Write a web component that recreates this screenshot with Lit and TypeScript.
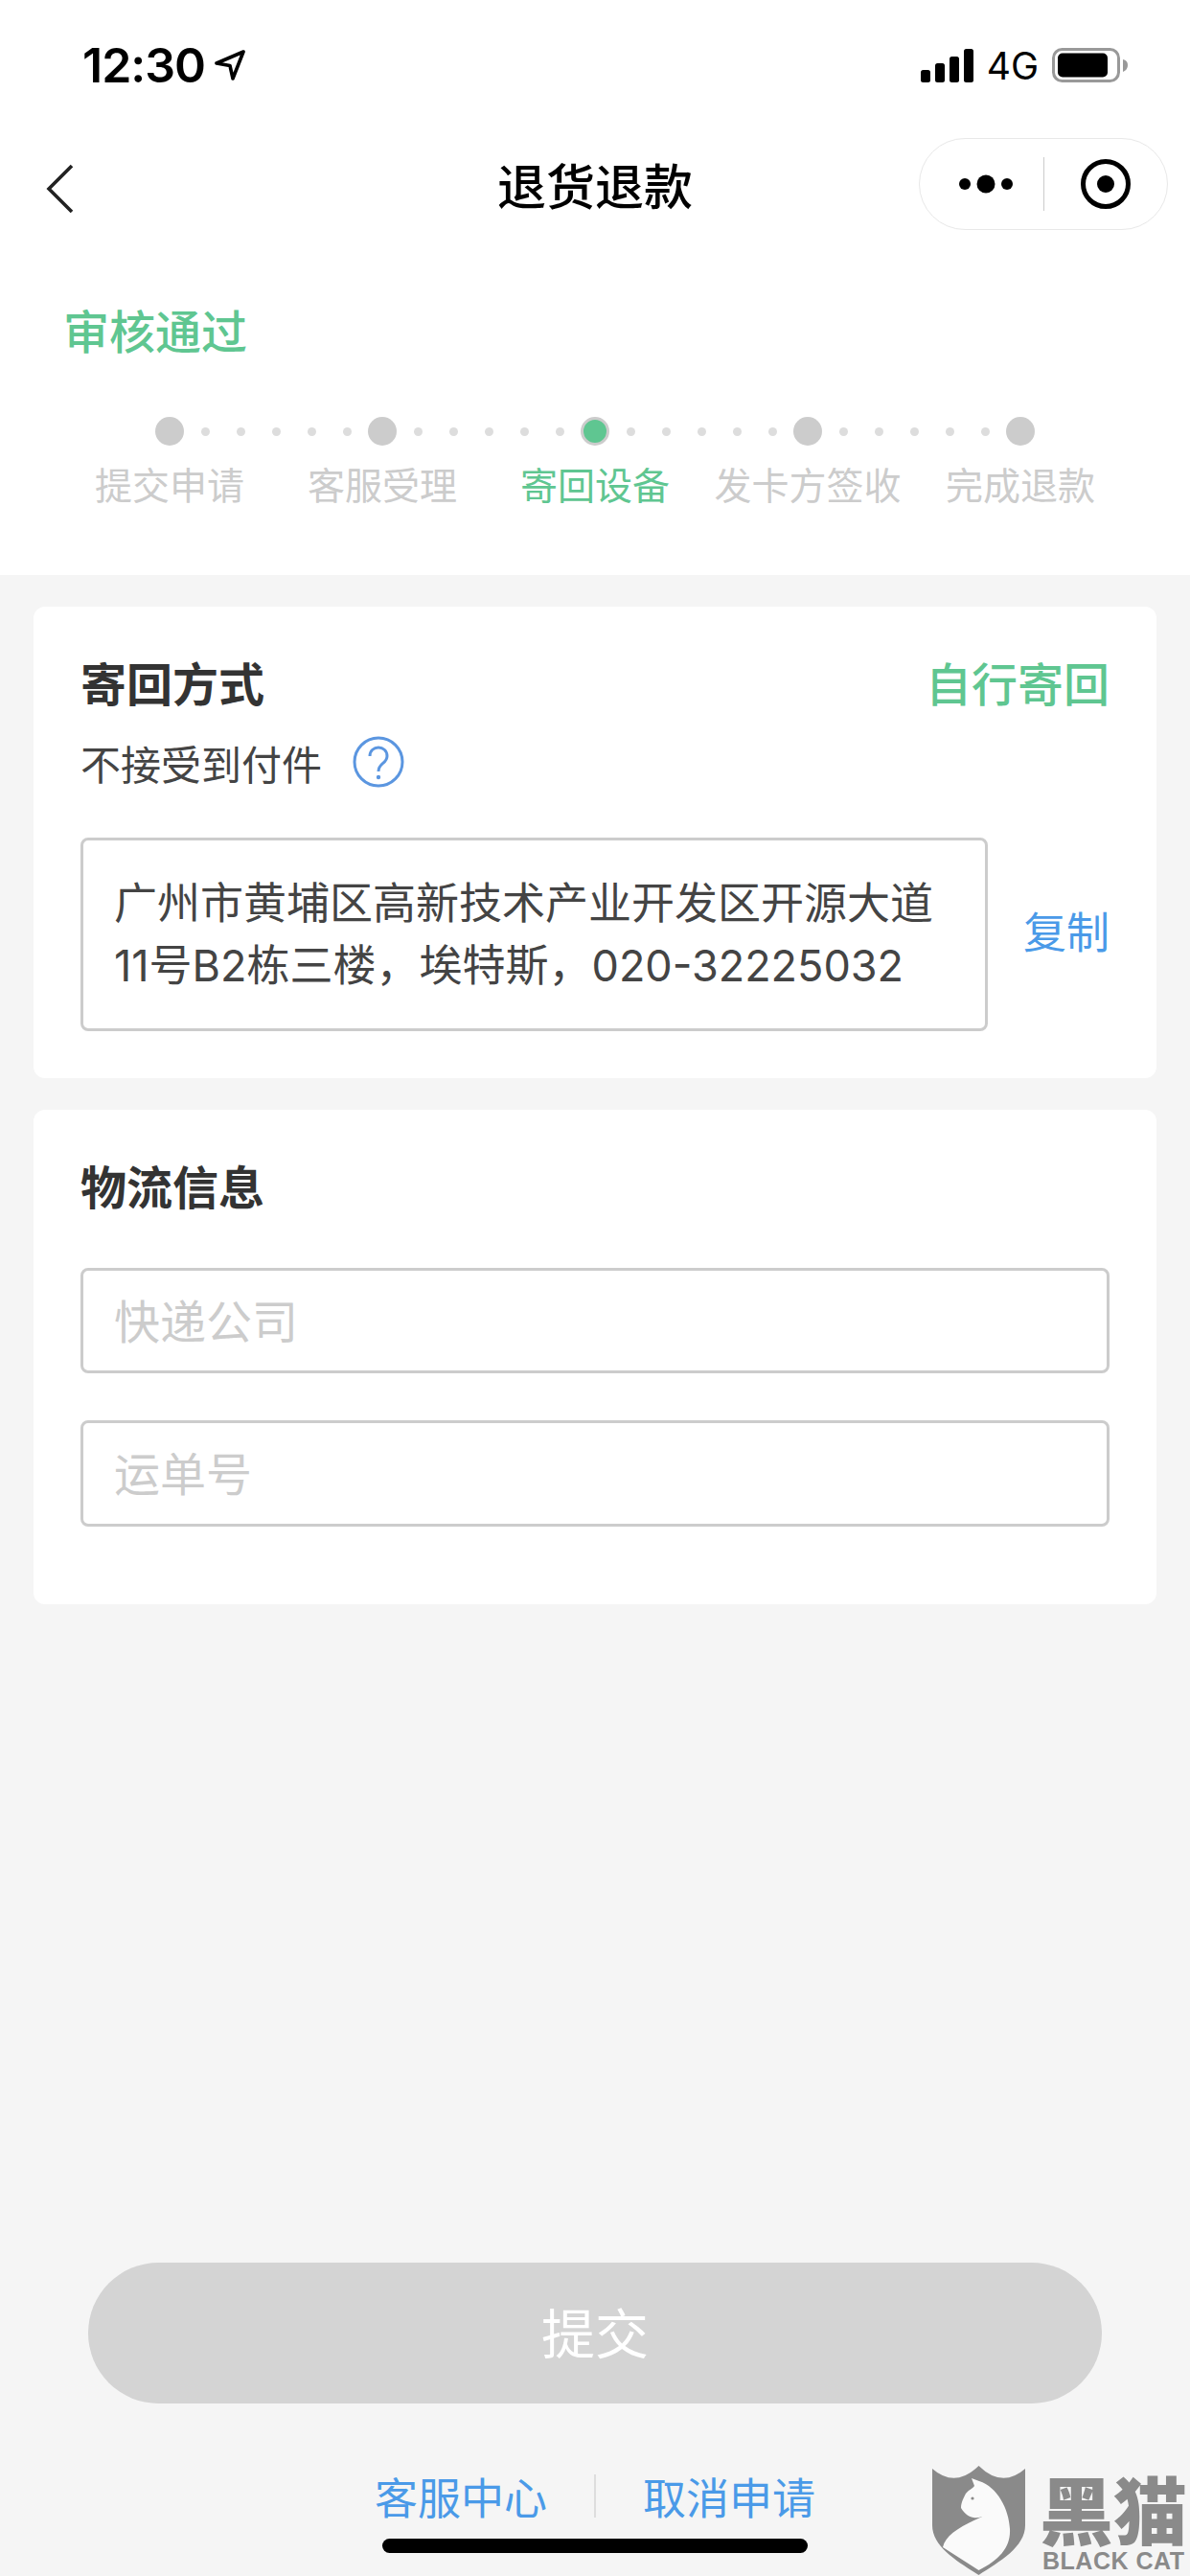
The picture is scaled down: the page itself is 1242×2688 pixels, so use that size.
import { LitElement, html, css } from "lit";
import { customElement } from "lit/decorators.js";

const STEPS = ["提交申请", "客服受理", "寄回设备", "发卡方签收", "完成退款"];

@customElement("app-root")
export class AppRoot extends LitElement {
  static styles = css`
    :host {
      display: flex;
      flex-direction: column;
      position: relative;
      width: 1242px;
      height: 2688px;
      overflow: hidden;
      background: #f5f5f5;
      font-family: "Inter", "Noto Sans CJK SC", sans-serif;
      color: #333;
    }
    .top { background: #fff; height: 600px; display: flex; flex-direction: column; }
    .status { height: 132px; display: flex; align-items: center; justify-content: space-between; padding: 4px 65px 0 86px; box-sizing: border-box; }
    .time-wrap { display: flex; align-items: center; gap: 9px; }
    .time { font-size: 50px; font-weight: 600; color: #000; letter-spacing: -1px; }
    .right { display: flex; align-items: center; gap: 14px; }
    .net { font-size: 39px; font-weight: 400; color: #000; }
    .nav { height: 96px; margin-top: 12px; display: grid; grid-template-columns: 1fr auto 1fr; align-items: center; padding: 0 23px; }
    .back { margin: 10px 0 0 25px; }
    .title { font-size: 51px; font-weight: 500; color: #000; line-height: 1; padding-top: 6px; }
    .capsule { justify-self: end; width: 260px; height: 96px; box-sizing: border-box; border: 1.5px solid #e8e8e8; border-radius: 48px; display: flex; align-items: center; }
    .cap-left { width: 130px; box-sizing: border-box; padding-left: 15px; display: flex; align-items: center; justify-content: center; height: 56px; border-right: 1.5px solid #ccc; }
    .cap-right { flex: 1; display: flex; justify-content: center; }
    .status-title { font-size: 48px; font-weight: 500; color: #5fc691; padding: 0 0 0 66px; line-height: 60px; margin-top: 77px; }
    .track { display: flex; align-items: center; padding: 0 162px; margin-top: 58px; height: 30px; }
    .big { width: 30px; height: 30px; border-radius: 50%; background: #ccc; box-sizing: border-box; flex: none; }
    .big.on { background: #5fc691; border: 3px solid #ccc; }
    .seg { flex: 1; display: flex; justify-content: center; gap: 28px; }
    .small { width: 9px; height: 9px; border-radius: 50%; background: #ddd; }
    .labels { display: grid; grid-template-columns: repeat(5, 222px); padding: 0 66px; margin-top: 18px; }
    .labels span { text-align: center; font-size: 39px; line-height: 48px; color: #ccc; white-space: nowrap; }
    .labels span.on { color: #5fc691; }
    .card { margin: 33px 35px 0; background: #fff; border-radius: 12px; padding: 55px 49px 0; box-sizing: border-box; }
    .c1 { height: 492px; }
    .c2 { height: 516px; }
    .head { display: flex; justify-content: space-between; align-items: center; height: 54px; }
    .h { font-size: 48px; font-weight: 600; color: #333; line-height: 54px; }
    .way { font-size: 48px; color: #5fc691; font-weight: 500; line-height: 54px; }
    .note { display: flex; align-items: center; gap: 32px; font-size: 42px; color: #444; margin-top: 26px; height: 54px; }
    .addr-row { display: flex; align-items: center; justify-content: space-between; margin-top: 52px; }
    .addr { width: 947px; height: 202px; box-sizing: border-box; border: 3px solid #ccc; border-radius: 8px; padding: 0 32px; font-size: 45px; line-height: 65px; color: #444; display: flex; align-items: center; white-space: pre-line; }
    .copy { font-size: 45px; color: #4a9ae8; padding-bottom: 10px; }
    .input { height: 110px; box-sizing: border-box; border: 3px solid #ccc; border-radius: 8px; padding: 0 32px 5px; display: flex; align-items: center; font-size: 48px; color: #ccc; }
    .i1 { margin-top: 56px; }
    .i2 { margin-top: 49px; height: 111px; }
    .spacer { flex: 1; }
    .submit { margin: 0 92px; height: 147px; padding-bottom: 6px; box-sizing: border-box; border-radius: 74px; background: #d4d4d4; color: #fff; font-size: 56px; display: flex; align-items: center; justify-content: center; }
    .links { display: flex; justify-content: center; align-items: center; margin-top: 70px; height: 52px; font-size: 45px; color: #4a9ae8; }
    .links i { width: 2px; height: 45px; background: #ddd; margin: 0 49px; }
    .home { align-self: center; width: 444px; height: 15px; border-radius: 8px; background: #000; margin-top: 19px; margin-bottom: 24px; }
    .mark { position: absolute; left: 973px; top: 2573px; width: 269px; height: 115px; color: #8a8a8a; }
    .mark svg { position: absolute; left: 0; top: 0; }
    .mk-cn { position: absolute; left: 112px; top: 9px; font-family: "Noto Sans CJK SC", sans-serif; font-size: 77px; font-weight: 900; line-height: 70px; white-space: nowrap; }
    .mk-en { position: absolute; left: 115px; top: 89px; font-family: "Liberation Sans", sans-serif; font-size: 25px; font-weight: 700; line-height: 20px; white-space: nowrap; letter-spacing: 0.5px; }
  `;

  render() {
    return html`
      <div class="top">
        <div class="status">
          <div class="time-wrap">
            <span class="time">12:30</span>
            <svg width="34" height="32" viewBox="0 0 34 32"><path d="M31 2 L3 14 L17 16.5 L20 30 Z" fill="none" stroke="#000" stroke-width="3.6" stroke-linejoin="round"/></svg>
          </div>
          <div class="right">
            <svg width="55" height="35" viewBox="0 0 55 35" fill="#000">
              <rect x="0" y="22" width="10" height="13" rx="2.5"/><rect x="15" y="15" width="10" height="20" rx="2.5"/><rect x="30" y="8" width="10" height="27" rx="2.5"/><rect x="45" y="0" width="10" height="35" rx="2.5"/>
            </svg>
            <span class="net">4G</span>
            <svg width="79" height="36" viewBox="0 0 79 36">
              <rect x="1.5" y="1.5" width="68" height="33" rx="9" fill="none" stroke="#999" stroke-width="3"/>
              <rect x="6" y="5.5" width="52" height="25" rx="5" fill="#000"/>
              <path d="M74 12 Q79 13 79 18 Q79 23 74 25 Z" fill="#999"/>
            </svg>
          </div>
        </div>
        <div class="nav">
          <svg class="back" width="30" height="52" viewBox="0 0 30 52"><path d="M27 2 L3 26 L27 50" fill="none" stroke="#222" stroke-width="3.6"/></svg>
          <div class="title">退货退款</div>
          <div class="capsule">
            <div class="cap-left">
              <svg width="62" height="20" viewBox="0 0 62 20" fill="#000"><circle cx="6" cy="10" r="6"/><circle cx="28" cy="10" r="9.5"/><circle cx="50" cy="10" r="6"/></svg>
            </div>
            <div class="cap-right">
              <svg width="52" height="52" viewBox="0 0 52 52"><circle cx="26" cy="26" r="23.5" fill="none" stroke="#000" stroke-width="5"/><circle cx="26" cy="26" r="9" fill="#000"/></svg>
            </div>
          </div>
        </div>
        <div class="status-title">审核通过</div>
        <div class="track">
          ${STEPS.map((_, i) => html`
            <span class="big ${i === 2 ? "on" : ""}"></span>
            ${i < 4 ? html`<div class="seg">${[0, 1, 2, 3, 4].map(() => html`<span class="small"></span>`)}</div>` : ""}
          `)}
        </div>
        <div class="labels">
          ${STEPS.map((s, i) => html`<span class="${i === 2 ? "on" : ""}">${s}</span>`)}
        </div>
      </div>
      <div class="card c1">
        <div class="head"><span class="h">寄回方式</span><span class="way">自行寄回</span></div>
        <div class="note">
          <span>不接受到付件</span>
          <svg width="54" height="54" viewBox="0 0 54 54">
            <circle cx="27" cy="27" r="25" fill="none" stroke="#5b96e0" stroke-width="3"/>
            <path d="M18 21 C18 9 36 9 36 21 C36 29 27 28 27 37" fill="none" stroke="#5b96e0" stroke-width="3"/>
            <circle cx="27" cy="43" r="2.2" fill="#5b96e0"/>
          </svg>
        </div>
        <div class="addr-row">
          <div class="addr">广州市黄埔区高新技术产业开发区开源大道
11号B2栋三楼，埃特斯，020-32225032</div>
          <span class="copy">复制</span>
        </div>
      </div>
      <div class="card c2">
        <div class="h">物流信息</div>
        <div class="input i1">快递公司</div>
        <div class="input i2">运单号</div>
      </div>
      <div class="spacer"></div>
      <div class="submit">提交</div>
      <div class="links"><span>客服中心</span><i></i><span>取消申请</span></div>
      <div class="home"></div>
      <div class="mark">
        <svg width="97" height="115" viewBox="0 0 97 115">
          <path d="M0 3 Q24 24 48.5 0 Q73 24 97 3 L97 62 C97 85 70 100 48.5 114 C27 100 0 85 0 62 Z" fill="#8a8a8a"/>
          <path d="M41 13 L49 16 C68 22 80 45 81 66 C82 85 70 98 48.5 109 L11 85 C14 72 28 64 52 53 C44 56 36 54 30 44 C30 38 33 33 35 29 C38 25 42 24 44 21 Z" fill="#fafafa"/>
          <circle cx="42" cy="34" r="1.6" fill="#8a8a8a"/>
        </svg>
        <div class="mk-cn">黑猫</div>
        <div class="mk-en">BLACK CAT</div>
      </div>
    `;
  }
}
